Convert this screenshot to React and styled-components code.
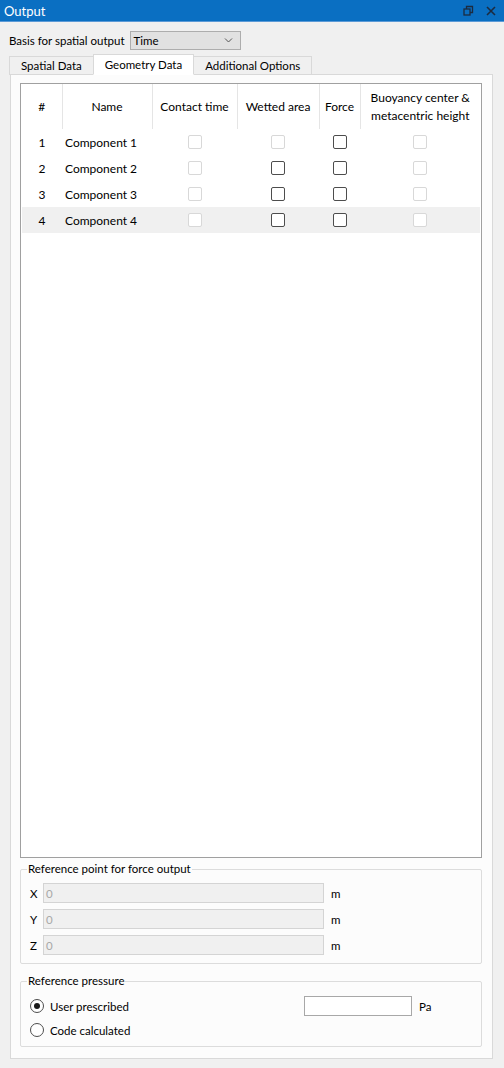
import React from 'react';
import styled, { createGlobalStyle } from 'styled-components';

const GlobalStyle = createGlobalStyle`
  html, body {
    margin: 0;
    padding: 0;
    background: #f0f0f0;
  }
  body {
    font-family: "Segoe UI", Lato, "Noto Sans", "Liberation Sans", sans-serif;
    font-size: 11.5px;
    color: #000000;
  }
  * { box-sizing: border-box; }
`;

const rows = [
  { id: 1, name: 'Component 1', wetted: false },
  { id: 2, name: 'Component 2', wetted: true },
  { id: 3, name: 'Component 3', wetted: true },
  { id: 4, name: 'Component 4', wetted: true, selected: true },
];

const RestoreIcon = () => (
  <svg width="11" height="11" viewBox="0 0 11 11" fill="none" stroke="#1c2b40" strokeWidth="1.3">
    <rect x="1" y="4" width="6" height="6" />
    <path d="M3.5 4V1.5h6v6H7" />
  </svg>
);

const CloseIcon = () => (
  <svg width="10" height="10" viewBox="0 0 10 10" stroke="#1c2b40" strokeWidth="1.6">
    <path d="M1 1l8 8M9 1l-8 8" />
  </svg>
);

const Chevron = () => (
  <svg width="9" height="5" viewBox="0 0 9 5" fill="none" stroke="#555" strokeWidth="1">
    <path d="M1 0.5l3.5 3.5 3.5-3.5" />
  </svg>
);

const App = () => {
  return (
    <Window>
      <GlobalStyle />
      <TitleBar>
        <Title>Output</Title>
        <TitleButtons>
          <RestoreIcon />
          <CloseIcon />
        </TitleButtons>
      </TitleBar>

      <Body>
        <BasisRow>
          <span>Basis for spatial output</span>
          <Combo>
            <span>Time</span>
            <Chevron />
          </Combo>
        </BasisRow>

        <TabBar>
          <Tab>Spatial Data</Tab>
          <Tab active>Geometry Data</Tab>
          <Tab>Additional Options</Tab>
        </TabBar>

        <Pane>
          <TableBox>
            <Table>
              <colgroup>
                <col style={{ width: 40 }} />
                <col style={{ width: 90 }} />
                <col style={{ width: 85 }} />
                <col style={{ width: 82 }} />
                <col style={{ width: 41 }} />
                <col />
              </colgroup>
              <thead>
                <tr>
                  <Th>#</Th>
                  <Th>Name</Th>
                  <Th>Contact time</Th>
                  <Th>Wetted area</Th>
                  <Th>Force</Th>
                  <Th last>Buoyancy center &amp;<br />metacentric height</Th>
                </tr>
              </thead>
              <tbody>
                {rows.map(r => (
                  <Row key={r.id} selected={r.selected}>
                    <NumCell>{r.id}</NumCell>
                    <NameCell>{r.name}</NameCell>
                    <BoxCell><Check disabled /></BoxCell>
                    <BoxCell><Check disabled={!r.wetted} /></BoxCell>
                    <BoxCell><Check /></BoxCell>
                    <BoxCell><Check disabled /></BoxCell>
                  </Row>
                ))}
              </tbody>
            </Table>
          </TableBox>

          <Group>
            <Legend>Reference point for force output</Legend>
            {['X', 'Y', 'Z'].map(axis => (
              <CoordRow key={axis}>
                <AxisLabel>{axis}</AxisLabel>
                <Field disabled width={281}>0</Field>
                <Unit>m</Unit>
              </CoordRow>
            ))}
          </Group>

          <Group pressure>
            <Legend>Reference pressure</Legend>
            <PressureGrid>
              <RadioRow>
                <Radio checked />
                <span>User prescribed</span>
              </RadioRow>
              <PaWrap>
                <Field width={108} />
                <Unit>Pa</Unit>
              </PaWrap>
              <RadioRow>
                <Radio />
                <span>Code calculated</span>
              </RadioRow>
            </PressureGrid>
          </Group>
        </Pane>
      </Body>
    </Window>
  );
};

const Window = styled.div`
  width: 504px;
  height: 1068px;
  display: flex;
  flex-direction: column;
  background: #f0f0f0;
  overflow: hidden;
`;

const TitleBar = styled.div`
  height: 22px;
  background: #0a6fc2;
  border-bottom: 1px solid #5c9ad6;
  display: flex;
  align-items: center;
  justify-content: space-between;
  padding: 0 8px 0 4px;
`;

const Title = styled.span`
  color: #ffffff;
  font-size: 13px;
`;

const TitleButtons = styled.div`
  display: flex;
  align-items: center;
  gap: 12px;
`;

const Body = styled.div`
  flex: 1;
  display: flex;
  flex-direction: column;
  padding: 9px 11px 9px 9px;
`;

const BasisRow = styled.div`
  display: flex;
  align-items: center;
  gap: 5px;
  height: 19px;
`;

const Combo = styled.div`
  width: 111px;
  height: 19px;
  background: #e1e1e1;
  border: 1px solid #adadad;
  display: flex;
  align-items: center;
  justify-content: space-between;
  padding: 0 7px 0 3px;
`;

const TabBar = styled.div`
  display: flex;
  align-items: flex-end;
  height: 20px;
  margin-top: 4px;
  padding-left: 1px;
`;

const Tab = styled.div`
  height: ${p => (p.active ? '21px' : '19px')};
  padding: 0 11px;
  display: flex;
  align-items: center;
  background: ${p => (p.active ? '#ffffff' : '#f0f0f0')};
  border: 1px solid #d9d9d9;
  border-bottom: ${p => (p.active ? '1px solid #ffffff' : '1px solid #d9d9d9')};
  margin-bottom: -1px;
  margin-left: -1px;
  position: relative;
  z-index: ${p => (p.active ? 1 : 0)};
`;

const Pane = styled.div`
  flex: 1;
  margin-left: 1px;
  background: #fcfcfc;
  border: 1px solid #d9d9d9;
  display: flex;
  flex-direction: column;
  padding: 8px 10px 11px 9px;
  gap: 4px;
`;

const TableBox = styled.div`
  flex: 1;
  background: #ffffff;
  border: 1px solid #a0a0a0;
  padding: 0 1px;
`;

const Table = styled.table`
  width: 100%;
  border-collapse: collapse;
  table-layout: fixed;
`;

const Th = styled.th`
  height: 45px;
  font-weight: normal;
  text-align: center;
  line-height: 18px;
  padding: 0;
  font-size: 12px;
  border-right: ${p => (p.last ? 'none' : '1px solid #e5e5e5')};
`;

const Row = styled.tr`
  height: 26px;
  font-size: 12px;
  background: ${p => (p.selected ? '#f0f0f0' : 'transparent')};
`;

const NumCell = styled.td`
  text-align: center;
  padding: 0;
`;

const NameCell = styled.td`
  padding: 0 0 0 3px;
  white-space: nowrap;
`;

const BoxCell = styled.td`
  text-align: center;
  padding: 0;
  font-size: 0;
`;

const Check = styled.span`
  display: inline-block;
  width: 14px;
  height: 14px;
  border: 1px solid ${p => (p.disabled ? '#d8d8d8' : '#4d4d4d')};
  border-radius: 2px;
  background: #ffffff;
  vertical-align: middle;
`;

const Group = styled.fieldset`
  margin: 0;
  border: 1px solid #dcdcdc;
  border-radius: 2px;
  padding: ${p => (p.pressure ? '6px 10px 4px 9px' : '7px 10px 8px 9px')};
  margin-top: ${p => (p.pressure ? '6px' : '0')};
  display: flex;
  flex-direction: column;
  gap: 6px;
`;

const Legend = styled.legend`
  padding: 0 1px;
  margin-left: -3px;
  line-height: 14px;
`;

const CoordRow = styled.div`
  display: flex;
  align-items: center;
  height: 20px;
`;

const AxisLabel = styled.span`
  width: 13px;
`;

const Field = styled.div`
  width: ${p => p.width}px;
  height: 20px;
  border: 1px solid ${p => (p.disabled ? '#d4d4d4' : '#a8a8a8')};
  background: ${p => (p.disabled ? '#f0f0f0' : '#ffffff')};
  color: #a8a8a8;
  padding: 0 2px;
  display: flex;
  align-items: center;
`;

const Unit = styled.span`
  margin-left: 7px;
`;

const PressureGrid = styled.div`
  display: grid;
  grid-template-columns: 274px auto;
  grid-template-rows: 24px 24px;
  align-items: center;
`;

const RadioRow = styled.div`
  display: flex;
  align-items: center;
  gap: 6px;
`;

const Radio = styled.span`
  width: 14px;
  height: 14px;
  border-radius: 50%;
  border: 1px solid #4d4d4d;
  background: #ffffff;
  display: inline-flex;
  align-items: center;
  justify-content: center;

  &::after {
    content: '';
    width: 6px;
    height: 6px;
    border-radius: 50%;
    background: ${p => (p.checked ? '#1a1a1a' : 'transparent')};
  }
`;

const PaWrap = styled.div`
  display: flex;
  align-items: center;
`;

export default App;
